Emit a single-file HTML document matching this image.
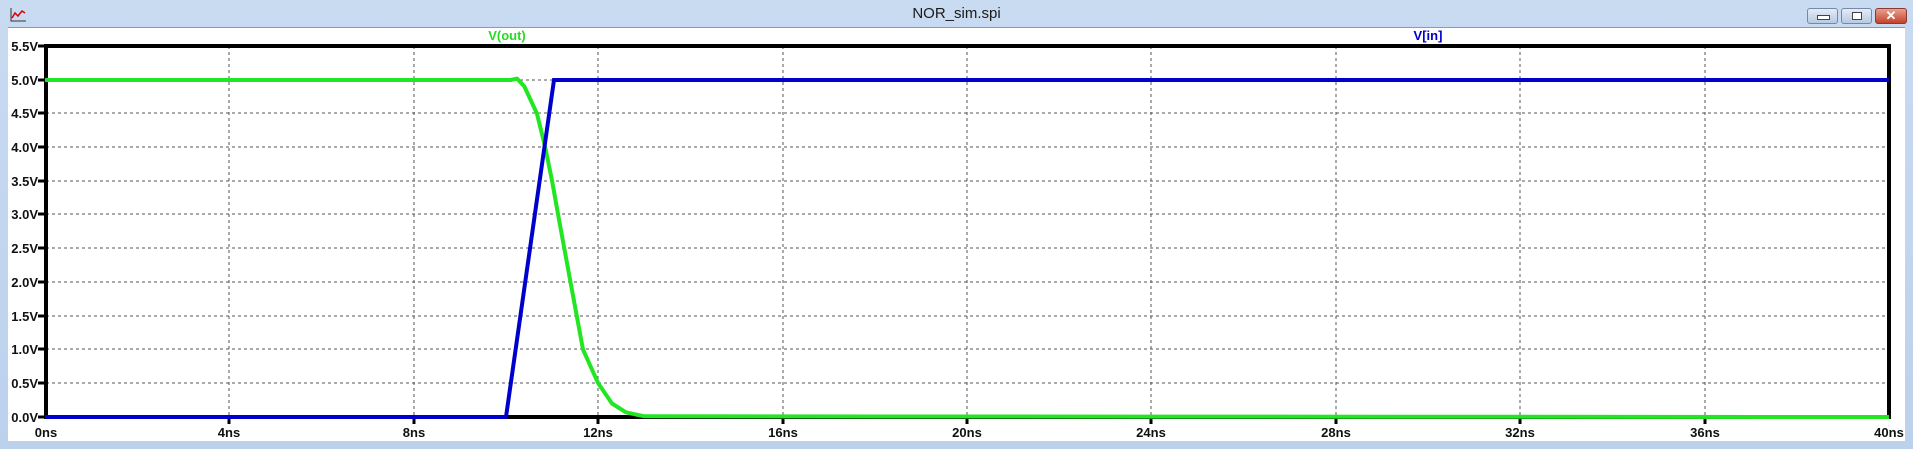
<!DOCTYPE html>
<html><head><style>
html,body{margin:0;padding:0;width:1913px;height:449px;overflow:hidden;background:#c4d6ee;}
.win{position:absolute;left:0;top:0;width:1913px;height:449px;background:linear-gradient(#c9dbf1,#bcd1ec);}
.title{position:absolute;left:0;top:0;width:1913px;height:27px;font:15px "Liberation Sans",sans-serif;color:#1a1a1a;text-align:center;line-height:28px;}
.plot{position:absolute;left:8px;top:27px;width:1897px;height:413px;background:#fff;border-top:1px solid #8a9cb4;}
.btn{position:absolute;top:8px;height:14px;border:1px solid #7489a8;border-radius:3px;background:linear-gradient(#e4ecf7,#b7c9e2);}
</style></head><body>
<div class="win">
<div class="title">NOR_sim.spi</div>
<svg style="position:absolute;left:9px;top:7px" width="18" height="16"><path d="M2 1v13h15" stroke="#333" fill="none"/><path d="M3 11l3-5 3 3 4-5 3 2" stroke="#d00" stroke-width="1.5" fill="none"/></svg>
<div class="btn" style="left:1807px;width:29px"><div style="position:absolute;left:9px;top:6px;width:11px;height:3px;border:1px solid #444;background:#fff"></div></div>
<div class="btn" style="left:1841px;width:29px"><div style="position:absolute;left:10px;top:3px;width:8px;height:6px;border:1px solid #444;background:#fff"></div></div>
<div class="btn" style="left:1875px;width:30px;background:linear-gradient(#e8a08e,#c4422b);border-color:#8a3a2e;color:#fff;font:bold 13px 'Liberation Sans',sans-serif;text-align:center;line-height:14px">✕</div>
<div class="plot"></div>
<svg style="position:absolute;left:0;top:0" width="1913" height="449" font-family="Liberation Sans, sans-serif">
<g stroke="#555" stroke-width="1" stroke-dasharray="3,3">
<line x1="229" y1="46" x2="229" y2="417"/><line x1="414" y1="46" x2="414" y2="417"/><line x1="598" y1="46" x2="598" y2="417"/><line x1="783" y1="46" x2="783" y2="417"/><line x1="967" y1="46" x2="967" y2="417"/><line x1="1151" y1="46" x2="1151" y2="417"/><line x1="1336" y1="46" x2="1336" y2="417"/><line x1="1520" y1="46" x2="1520" y2="417"/><line x1="1705" y1="46" x2="1705" y2="417"/>
<line x1="46" y1="113" x2="1889" y2="113"/><line x1="46" y1="147" x2="1889" y2="147"/><line x1="46" y1="181" x2="1889" y2="181"/><line x1="46" y1="214" x2="1889" y2="214"/><line x1="46" y1="248" x2="1889" y2="248"/><line x1="46" y1="282" x2="1889" y2="282"/><line x1="46" y1="316" x2="1889" y2="316"/><line x1="46" y1="349" x2="1889" y2="349"/><line x1="46" y1="383" x2="1889" y2="383"/><line x1="46" y1="80" x2="1889" y2="80"/>
</g>
<rect x="46" y="46" width="1843" height="371" fill="none" stroke="#000" stroke-width="4"/>
<g stroke="#000" stroke-width="3">
<line x1="38" y1="46" x2="46" y2="46"/><line x1="38" y1="80" x2="46" y2="80"/><line x1="38" y1="113" x2="46" y2="113"/><line x1="38" y1="147" x2="46" y2="147"/><line x1="38" y1="181" x2="46" y2="181"/><line x1="38" y1="214" x2="46" y2="214"/><line x1="38" y1="248" x2="46" y2="248"/><line x1="38" y1="282" x2="46" y2="282"/><line x1="38" y1="316" x2="46" y2="316"/><line x1="38" y1="349" x2="46" y2="349"/><line x1="38" y1="383" x2="46" y2="383"/><line x1="38" y1="417" x2="46" y2="417"/>
<line x1="229" y1="417" x2="229" y2="424"/><line x1="414" y1="417" x2="414" y2="424"/><line x1="598" y1="417" x2="598" y2="424"/><line x1="783" y1="417" x2="783" y2="424"/><line x1="967" y1="417" x2="967" y2="424"/><line x1="1151" y1="417" x2="1151" y2="424"/><line x1="1336" y1="417" x2="1336" y2="424"/><line x1="1520" y1="417" x2="1520" y2="424"/><line x1="1705" y1="417" x2="1705" y2="424"/>
</g>
<g font-size="13" font-weight="bold" fill="#111" text-anchor="end">
<text x="38" y="51">5.5V</text><text x="38" y="85">5.0V</text><text x="38" y="118">4.5V</text><text x="38" y="152">4.0V</text><text x="38" y="186">3.5V</text><text x="38" y="219">3.0V</text><text x="38" y="253">2.5V</text><text x="38" y="287">2.0V</text><text x="38" y="321">1.5V</text><text x="38" y="354">1.0V</text><text x="38" y="388">0.5V</text><text x="38" y="422">0.0V</text>
</g>
<g font-size="13" font-weight="bold" fill="#111" text-anchor="middle">
<text x="46" y="437">0ns</text><text x="229" y="437">4ns</text><text x="414" y="437">8ns</text><text x="598" y="437">12ns</text><text x="783" y="437">16ns</text><text x="967" y="437">20ns</text><text x="1151" y="437">24ns</text><text x="1336" y="437">28ns</text><text x="1520" y="437">32ns</text><text x="1705" y="437">36ns</text><text x="1889" y="437">40ns</text>
</g>
<text x="507" y="40" font-size="13" font-weight="bold" fill="#22dd22" text-anchor="middle">V(out)</text>
<text x="1428" y="40" font-size="13" font-weight="bold" fill="#0000cc" text-anchor="middle">V[in]</text>
<polyline fill="none" stroke="#22e622" stroke-width="4" stroke-linejoin="round" points="45,80 510.6,80 517.1,78.6 524.4,86.5 536.9,113.5 545.2,147.2 552.1,181 558.1,214.6 570.5,282.1 583,349.5 598.2,383.3 612,403.5 625.9,412.3 644.3,416.3 1889,417"/>
<polyline fill="none" stroke="#0000cc" stroke-width="4" points="45,417 506,417 554,80 1889,80"/>
</svg>
</div>
</body></html>
